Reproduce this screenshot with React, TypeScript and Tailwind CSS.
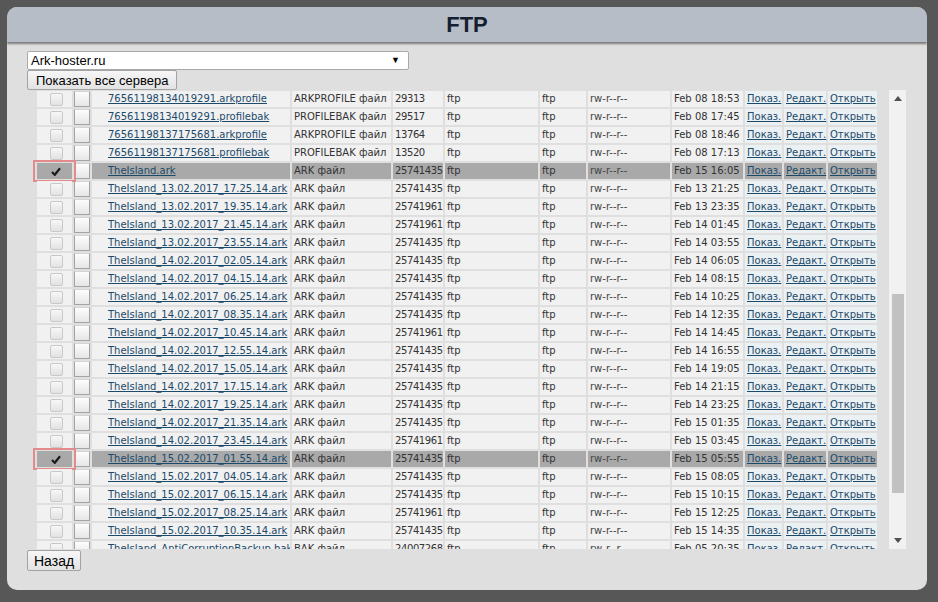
import React from "react";

type Row = {
    name: string;
    type: string;
    size: string;
    date: string;
    sel?: boolean;
};

const rows: Row[] = [
    { name: "76561198134019291.arkprofile", type: "ARKPROFILE файл", size: "29313", date: "Feb 08 18:53" },
    { name: "76561198134019291.profilebak", type: "PROFILEBAK файл", size: "29517", date: "Feb 08 17:45" },
    { name: "76561198137175681.arkprofile", type: "ARKPROFILE файл", size: "13764", date: "Feb 08 18:46" },
    { name: "76561198137175681.profilebak", type: "PROFILEBAK файл", size: "13520", date: "Feb 08 17:13" },
    { name: "TheIsland.ark", type: "ARK файл", size: "25741435", date: "Feb 15 16:05", sel: true },
    { name: "TheIsland_13.02.2017_17.25.14.ark", type: "ARK файл", size: "25741435", date: "Feb 13 21:25" },
    { name: "TheIsland_13.02.2017_19.35.14.ark", type: "ARK файл", size: "25741961", date: "Feb 13 23:35" },
    { name: "TheIsland_13.02.2017_21.45.14.ark", type: "ARK файл", size: "25741961", date: "Feb 14 01:45" },
    { name: "TheIsland_13.02.2017_23.55.14.ark", type: "ARK файл", size: "25741435", date: "Feb 14 03:55" },
    { name: "TheIsland_14.02.2017_02.05.14.ark", type: "ARK файл", size: "25741435", date: "Feb 14 06:05" },
    { name: "TheIsland_14.02.2017_04.15.14.ark", type: "ARK файл", size: "25741435", date: "Feb 14 08:15" },
    { name: "TheIsland_14.02.2017_06.25.14.ark", type: "ARK файл", size: "25741435", date: "Feb 14 10:25" },
    { name: "TheIsland_14.02.2017_08.35.14.ark", type: "ARK файл", size: "25741435", date: "Feb 14 12:35" },
    { name: "TheIsland_14.02.2017_10.45.14.ark", type: "ARK файл", size: "25741961", date: "Feb 14 14:45" },
    { name: "TheIsland_14.02.2017_12.55.14.ark", type: "ARK файл", size: "25741435", date: "Feb 14 16:55" },
    { name: "TheIsland_14.02.2017_15.05.14.ark", type: "ARK файл", size: "25741435", date: "Feb 14 19:05" },
    { name: "TheIsland_14.02.2017_17.15.14.ark", type: "ARK файл", size: "25741435", date: "Feb 14 21:15" },
    { name: "TheIsland_14.02.2017_19.25.14.ark", type: "ARK файл", size: "25741435", date: "Feb 14 23:25" },
    { name: "TheIsland_14.02.2017_21.35.14.ark", type: "ARK файл", size: "25741435", date: "Feb 15 01:35" },
    { name: "TheIsland_14.02.2017_23.45.14.ark", type: "ARK файл", size: "25741961", date: "Feb 15 03:45" },
    { name: "TheIsland_15.02.2017_01.55.14.ark", type: "ARK файл", size: "25741435", date: "Feb 15 05:55", sel: true },
    { name: "TheIsland_15.02.2017_04.05.14.ark", type: "ARK файл", size: "25741435", date: "Feb 15 08:05" },
    { name: "TheIsland_15.02.2017_06.15.14.ark", type: "ARK файл", size: "25741435", date: "Feb 15 10:15" },
    { name: "TheIsland_15.02.2017_08.25.14.ark", type: "ARK файл", size: "25741961", date: "Feb 15 12:25" },
    { name: "TheIsland_15.02.2017_10.35.14.ark", type: "ARK файл", size: "25741435", date: "Feb 15 14:35" },
    { name: "TheIsland_AntiCorruptionBackup.bak", type: "BAK файл", size: "24007268", date: "Feb 05 20:35" },
];

const Checkbox = ({ checked }: { checked?: boolean }) => {
    if (checked) {
        return (
            <div className="w-[13px] h-[13px] rounded-[2px] flex items-center justify-center">
                <svg width="10" height="9" viewBox="0 0 10 9">
                    <path d="M1 5 L3.8 7.8 L9 1.2" fill="none" stroke="#1c1c1c" strokeWidth="2.2" />
                </svg>
            </div>
        );
    }
    return (
        <div className="w-[13px] h-[13px] rounded-[2px] border border-[#c9c9c9] bg-gradient-to-b from-[#f7f7f7] to-[#e2e2e2]" />
    );
};

const FileRow = ({ row }: { row: Row }) => {
    const cell = row.sel ? "bg-[#a9a9a9]" : "bg-[#f1f1f1]";
    const act = row.sel ? "bg-[#a9a9a9]" : "bg-[#ebf0f3]";
    const link = "underline text-[#1b4a6b]";
    return (
        <div className="grid grid-cols-[35px_16px_198px_99px_50px_93px_46px_82px_71px_37px_42px_49px] gap-x-[2px] h-[16px] leading-[16px] text-[10px] text-[#333]">
            <div className={`${cell} relative flex items-center justify-center pl-[3px]`}>
                <Checkbox checked={row.sel} />
                {row.sel && (
                    <div className="absolute -left-[4px] -right-[4px] -top-[3px] -bottom-[3px] border-2 border-[#e38a8d]" />
                )}
            </div>
            <div className="border border-[#a3a3a3] border-t-[#d5d5d5] bg-gradient-to-b from-[#fdfdfd] to-[#e6e6e6]" />
            <div className={`${cell} pl-[16px] whitespace-nowrap overflow-hidden`}>
                <span className={link}>{row.name}</span>
            </div>
            <div className={`${cell} pl-[2px] whitespace-nowrap`}>{row.type}</div>
            <div className={`${cell} pl-[2px] tracking-[-0.4px] whitespace-nowrap overflow-hidden`}>{row.size}</div>
            <div className={`${cell} pl-[2px]`}>ftp</div>
            <div className={`${cell} pl-[2px]`}>ftp</div>
            <div className={`${cell} pl-[2px] text-[#444]`}>rw-r--r--</div>
            <div className={`${cell} pl-[2px] whitespace-nowrap`}>{row.date}</div>
            <div className={`${act} pl-[2px]`}><span className={link}>Показ.</span></div>
            <div className={`${act} pl-[2px]`}><span className={link}>Редакт.</span></div>
            <div className={`${act} pl-[2px]`}><span className={link}>Открыть</span></div>
        </div>
    );
};

const App = () => {
    return (
        <div className="w-[938px] h-[602px] bg-[#575757] pt-[7px] pl-[7px] font-['Liberation_Sans',Arial,sans-serif]">
            <div className="w-[920px] h-[583px] rounded-[10px] bg-[#dfdfdf] overflow-hidden flex flex-col">
                <div className="h-[35px] bg-[#b7bdc7] shadow-[0_2px_2px_rgba(0,0,0,0.45)] flex items-center justify-center relative z-10">
                    <span className="text-[22px] font-bold text-[#142030]">FTP</span>
                </div>
                <div className="px-[20px] pt-[9px] flex flex-col items-start">
                    <div className="w-[382px] h-[19px] bg-white border border-[#a9a9a9] rounded-[2px] flex items-center justify-between pl-[3px] pr-[8px] text-[13px] text-black">
                        <span>Ark-hoster.ru</span>
                        <span className="text-[9px]">▼</span>
                    </div>
                    <button className="h-[20px] px-[8px] border border-[#a3a3a3] rounded-[2px] bg-gradient-to-b from-[#f6f6f6] to-[#e3e3e3] text-[13px] text-black leading-none">
                        Показать все сервера
                    </button>
                    <div className="flex gap-[12px] h-[459px]">
                        <div className="w-[850px] pl-[10px] h-full overflow-hidden font-['DejaVu_Sans',Verdana,sans-serif]">
                            <div className="flex flex-col gap-y-[2px] pt-[1px]">
                                {rows.map((r) => (
                                    <FileRow key={r.name} row={r} />
                                ))}
                            </div>
                        </div>
                        <div className="w-[17px] h-full bg-[#f1f1f1] flex flex-col items-center justify-between py-[6px] relative">
                            <svg width="8" height="5" viewBox="0 0 8 5"><path d="M0 5 L4 0 L8 5 Z" fill="#505050" /></svg>
                            <div className="absolute left-[3px] right-[2px] top-[204px] h-[199px] bg-[#c1c1c1]" />
                            <svg width="8" height="5" viewBox="0 0 8 5"><path d="M0 0 L4 5 L8 0 Z" fill="#505050" /></svg>
                        </div>
                    </div>
                    <button className="mt-[1px] h-[21px] px-[6px] border border-[#a3a3a3] rounded-[2px] bg-gradient-to-b from-[#f6f6f6] to-[#e3e3e3] text-[14px] text-black leading-none">
                        Назад
                    </button>
                </div>
            </div>
        </div>
    );
};

export default App;
